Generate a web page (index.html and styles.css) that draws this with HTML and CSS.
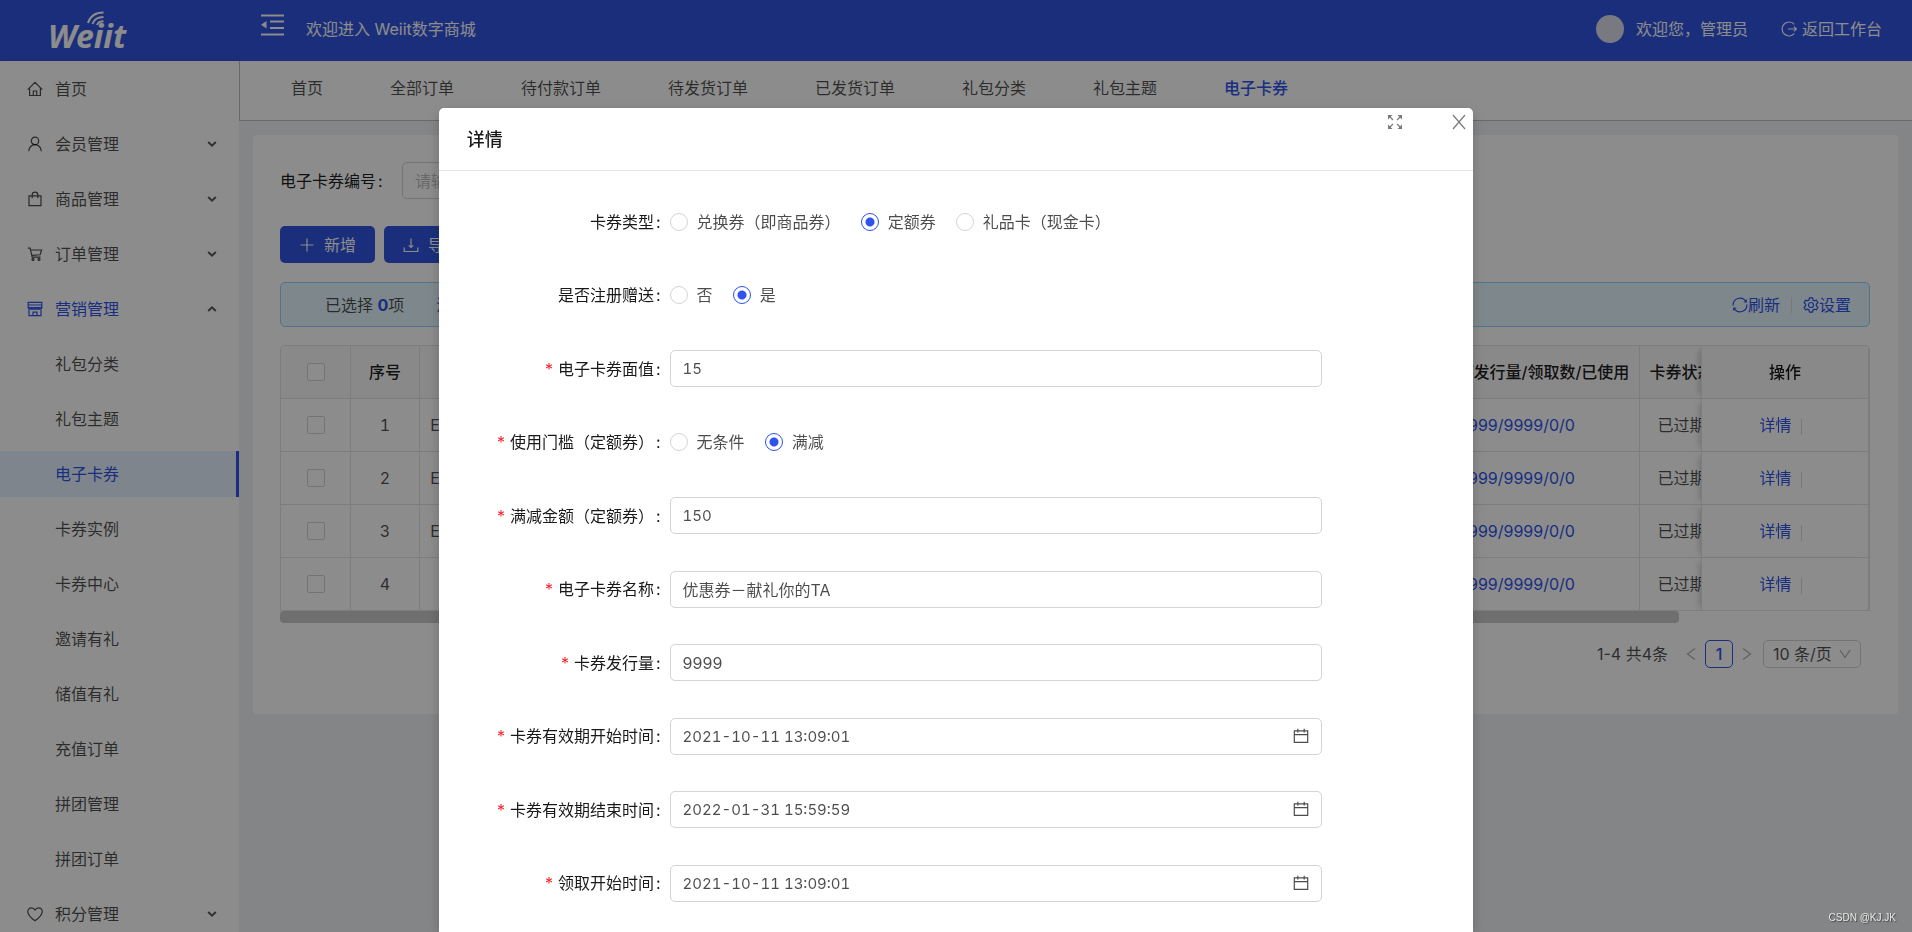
FILE: index.html
```html
<!DOCTYPE html>
<html lang="zh-CN">
<head>
<meta charset="utf-8">
<title>Weiit数字商城</title>
<link rel="stylesheet" href="styles.css">
</head>
<body>
<svg class="sprite" aria-hidden="true">
  <symbol id="i-home" viewBox="0 0 16 16"><path d="M.7 8.6 8 1.4l7.3 7.2M2.6 7.4v7.1h10.8V7.4M6.3 14.4V10h3.4v4.4"/></symbol>
  <symbol id="i-user" viewBox="0 0 16 16"><circle cx="8" cy="4.9" r="3.7"/><path d="M1.7 15.2c.2-3.700 2.800-6.600 6.300-6.600s6.100 2.900 6.300 6.600"/></symbol>
  <symbol id="i-bag" viewBox="0 0 16 16"><path d="M2 4.800h12v9.800H2zM5.200 7.300V4a2.800 2.800 0 0 1 5.600 0v3.300"/></symbol>
  <symbol id="i-cart" viewBox="0 0 16 16"><path d="M.8 2.200h2.300l2.100 8.900h8.300M3.600 4h11l-1.500 4.800-8.300.5"/><circle cx="6" cy="13.400" r="1"/><circle cx="12" cy="13.400" r="1"/></symbol>
  <symbol id="i-shop" viewBox="0 0 16 16"><path d="M1.200 1.400h13.600v5.200H1.200zM1.200 4h13.600M2 8v6.600h12V8M1.200 6.600c0 2.200 3.400 2.200 3.400 0 0 2.200 3.400 2.200 3.400 0 0 2.200 3.400 2.200 3.400 0 0 2.200 3.400 2.200 3.400 0M6 14.500v-3.300h4v3.300"/></symbol>
  <symbol id="i-heart" viewBox="0 0 16 16"><path d="M8 14.800C4.500 12.200.8 9.400.8 5.700.8 3.400 2.400 1.800 4.500 1.800c1.500 0 2.800.8 3.500 2.200.7-1.400 2-2.200 3.500-2.200 2.100 0 3.700 1.600 3.700 3.900 0 3.700-3.700 6.500-7.200 9.100z"/></symbol>
  <symbol id="i-down" viewBox="0 0 10 10"><path d="M1.200 3 5 6.700 8.800 3"/></symbol>
  <symbol id="i-wide-down" viewBox="0 0 14 14"><path d="M2 3l5 7.500L12 3"/></symbol>
  <symbol id="i-left" viewBox="0 0 10 14"><path d="M9 1.500 1.500 7 9 12.500"/></symbol>
  <symbol id="i-calendar" viewBox="0 0 16 16"><path d="M1.300 2.800h13.400v11.600H1.300zM1.300 6.700h13.400M4.800.8v3.600M11.200.8v3.600"/></symbol>
  <symbol id="i-sync" viewBox="0 0 16 16"><path d="M1.200 8.600A6.800 6.800 0 0 1 13.900 4.700M14.800 7.400A6.800 6.800 0 0 1 2.100 11.300M14.300 2.400v2.600h-2.600M1.700 13.600V11h2.600"/></symbol>
  <symbol id="i-gear" viewBox="0 0 16 16"><path d="M6.500.9h3l.5 2.100 1.300.8 2.100-.7 1.500 2.600-1.600 1.500v1.600l1.600 1.500-1.500 2.600-2.100-.7-1.300.8-.5 2.100h-3L6 13l-1.300-.8-2.100.7-1.500-2.600 1.600-1.500V7.200L1.100 5.700l1.500-2.600 2.100.7L6 3z"/><circle cx="8" cy="8" r="2.500"/></symbol>
</svg>

<div class="app">
  <header class="top">
    <div class="brand">
      <svg class="logo" viewBox="0 0 90 44" role="img" aria-label="Weiit">
        <g class="waves"><path d="M42 16c2-6.500 7.500-10.500 15.500-10.500"/><path d="M46.500 17c1.500-4.500 5.500-7 11-7"/><path d="M51 18c1-2.500 3.200-3.700 6.500-3.700"/></g>
        <text class="logo-text" x="2" y="41">Weiit</text>
      </svg>
    </div>
    <button class="fold" aria-label="收起菜单">
      <svg viewBox="0 0 24 22"><path d="M0 1.500h23M9 7.500h14M9 14h14M0 20.500h23"/><path class="solid" d="M0 10.800 5.500 7v7.600z"/></svg>
    </button>
    <span class="welcome">欢迎进入 Weiit数字商城</span>
    <div class="account">
      <span class="avatar"></span>
      <span class="hello">欢迎您，管理员</span>
      <a class="back" href="#"><svg class="icon" viewBox="0 0 16 16"><path d="M13.300 3.300a7 7 0 1 0 0 9.400M7 8h8.300M13 5.700 15.300 8 13 10.300"/></svg>返回工作台</a>
    </div>
  </header>

  <div class="body">
    <nav class="side">
      <a class="item" href="#"><svg class="icon"><use href="#i-home"/></svg>首页</a>
      <a class="item" href="#"><svg class="icon"><use href="#i-user"/></svg>会员管理<svg class="arrow"><use href="#i-down"/></svg></a>
      <a class="item" href="#"><svg class="icon"><use href="#i-bag"/></svg>商品管理<svg class="arrow"><use href="#i-down"/></svg></a>
      <a class="item" href="#"><svg class="icon"><use href="#i-cart"/></svg>订单管理<svg class="arrow"><use href="#i-down"/></svg></a>
      <a class="item open" href="#"><svg class="icon"><use href="#i-shop"/></svg>营销管理<svg class="arrow"><use href="#i-down"/></svg></a>
      <a class="item sub" href="#">礼包分类</a>
      <a class="item sub" href="#">礼包主题</a>
      <a class="item sub active" href="#">电子卡券</a>
      <a class="item sub" href="#">卡券实例</a>
      <a class="item sub" href="#">卡券中心</a>
      <a class="item sub" href="#">邀请有礼</a>
      <a class="item sub" href="#">储值有礼</a>
      <a class="item sub" href="#">充值订单</a>
      <a class="item sub" href="#">拼团管理</a>
      <a class="item sub" href="#">拼团订单</a>
      <a class="item" href="#"><svg class="icon"><use href="#i-heart"/></svg>积分管理<svg class="arrow"><use href="#i-down"/></svg></a>
    </nav>

    <main class="main">
      <div class="tabs">
        <a href="#">首页</a><a href="#">全部订单</a><a href="#">待付款订单</a><a href="#">待发货订单</a><a href="#">已发货订单</a><a href="#">礼包分类</a><a href="#">礼包主题</a><a class="current" href="#">电子卡券</a>
      </div>

      <section class="card">
        <div class="search">
          <label for="code">电子卡券编号<span class="colon">:</span></label>
          <input class="box" id="code" type="text" placeholder="请输入">
        </div>
        <div class="actions">
          <button class="btn"><svg class="icon" viewBox="0 0 16 16"><path d="M8 1.500v13M1.500 8h13"/></svg>新增</button>
          <button class="btn"><svg class="icon" viewBox="0 0 16 16"><path d="M1.200 10.500v4h13.600v-4M8 1.500v9M5.800 8.300 8 10.500l2.200-2.200"/></svg>导出</button>
        </div>
        <div class="notice">
          <span>已选择 <b>0</b>项</span>
          <a class="clear" href="#">清空</a>
          <div class="tools">
            <a href="#"><svg class="icon"><use href="#i-sync"/></svg>刷新</a>
            <i class="bar"></i>
            <a href="#"><svg class="icon"><use href="#i-gear"/></svg>设置</a>
          </div>
        </div>

        <div class="table-wrap">
          <table class="grid">
            <colgroup><col class="c-check"><col class="c-no"><col class="c-code"><col class="c-name"><col class="c-count"><col class="c-state"><col class="c-time"><col class="c-op"></colgroup>
            <thead>
              <tr><th><input type="checkbox" aria-label="全选"></th><th>序号</th><th>编号</th><th>电子卡券名称</th><th>发行总量/发行量/领取数/已使用</th><th>卡券状态</th><th></th><th class="fixed">操作</th></tr>
            </thead>
            <tbody>
              <tr><td><input type="checkbox" aria-label="选择1"></td><td>1</td><td>EC202110110</td><td></td><td><a href="#">9999/9999/0/0</a></td><td>已过期</td><td></td><td class="fixed"><a href="#">详情</a><i class="bar"></i></td></tr>
              <tr><td><input type="checkbox" aria-label="选择2"></td><td>2</td><td>EC202110110</td><td></td><td><a href="#">9999/9999/0/0</a></td><td>已过期</td><td></td><td class="fixed"><a href="#">详情</a><i class="bar"></i></td></tr>
              <tr><td><input type="checkbox" aria-label="选择3"></td><td>3</td><td>EC202110111</td><td></td><td><a href="#">9999/9999/0/0</a></td><td>已过期</td><td></td><td class="fixed"><a href="#">详情</a><i class="bar"></i></td></tr>
              <tr><td><input type="checkbox" aria-label="选择4"></td><td>4</td><td>EC20211</td><td></td><td><a href="#">9999/9999/0/0</a></td><td>已过期</td><td></td><td class="fixed"><a href="#">详情</a><i class="bar"></i></td></tr>
            </tbody>
          </table>
        </div>
        <div class="scroll"><div class="thumb"></div></div>

        <div class="pager">
          <span>1-4 共4条</span>
          <button class="step" aria-label="上一页"><svg><use href="#i-left"/></svg></button>
          <button class="page">1</button>
          <button class="step next" aria-label="下一页"><svg><use href="#i-left"/></svg></button>
          <div class="size">
            <select aria-label="每页条数"><option>10 条/页</option></select>
            <svg><use href="#i-wide-down"/></svg>
          </div>
        </div>
      </section>
    </main>
  </div>
</div>

<div class="mask">
  <div class="modal" role="dialog" aria-labelledby="title">
    <div class="modal-head">
      <h2 id="title">详情</h2>
      <div class="modal-tools">
        <button aria-label="全屏"><svg viewBox="0 0 16 16"><path d="M6 6 2.500 2.500M10 6l3.500-3.500M6 10l-3.500 3.500M10 10l3.500 3.500"/><path class="solid" d="M1 1h4.500L1 5.500zM15 1v4.500L10.500 1zM1 15v-4.500L5.500 15zM15 15h-4.500l4.500-4.500z"/></svg></button>
        <button aria-label="关闭"><svg viewBox="0 0 16 16"><path d="M2 1l12 14M14 1 2 15"/></svg></button>
      </div>
    </div>
    <form class="form">
      <div class="row"><span class="label">卡券类型<span class="colon">:</span></span>
        <div class="radios"><label><input type="radio" name="type">兑换券（即商品券）</label><label><input type="radio" name="type" checked>定额券</label><label><input type="radio" name="type">礼品卡（现金卡）</label></div></div>
      <div class="row"><span class="label">是否注册赠送<span class="colon">:</span></span>
        <div class="radios"><label><input type="radio" name="gift">否</label><label><input type="radio" name="gift" checked>是</label></div></div>
      <div class="row"><label class="label must" for="value">电子卡券面值<span class="colon">:</span></label>
        <input class="box num" id="value" type="text" value="15"></div>
      <div class="row"><span class="label must">使用门槛（定额券）<span class="colon">:</span></span>
        <div class="radios"><label><input type="radio" name="limit">无条件</label><label><input type="radio" name="limit" checked>满减</label></div></div>
      <div class="row"><label class="label must" for="full">满减金额（定额券）<span class="colon">:</span></label>
        <input class="box num" id="full" type="text" value="150"></div>
      <div class="row"><label class="label must" for="name">电子卡券名称<span class="colon">:</span></label>
        <input class="box" id="name" type="text" value="优惠券－献礼你的TA"></div>
      <div class="row"><label class="label must" for="amount">卡券发行量<span class="colon">:</span></label>
        <input class="box" id="amount" type="text" value="9999"></div>
      <div class="row"><label class="label must" for="start">卡券有效期开始时间<span class="colon">:</span></label>
        <div class="date"><input class="box num" id="start" type="text" value="2021-10-11 13:09:01"><svg class="icon"><use href="#i-calendar"/></svg></div></div>
      <div class="row"><label class="label must" for="end">卡券有效期结束时间<span class="colon">:</span></label>
        <div class="date"><input class="box num" id="end" type="text" value="2022-01-31 15:59:59"><svg class="icon"><use href="#i-calendar"/></svg></div></div>
      <div class="row"><label class="label must" for="take">领取开始时间<span class="colon">:</span></label>
        <div class="date"><input class="box num" id="take" type="text" value="2021-10-11 13:09:01"><svg class="icon"><use href="#i-calendar"/></svg></div></div>
    </form>
  </div>
</div>
<span class="mark">CSDN @KJ.JK</span>
</body>
</html>
```
FILE: styles.css
```css
:root {
  --primary: #2f54eb;
  --text: rgba(0, 0, 0, .7);
  --strong: rgba(0, 0, 0, .9);
  --line: #e4e4e4;
  --border: #d4d4d4;
}
* { box-sizing: border-box; }
body {
  margin: 0;
  overflow: hidden;
  font: 16px/24px Inter, "Noto Sans CJK SC", sans-serif;
  color: var(--text);
}
a { color: var(--primary); text-decoration: none; }
button, input, select { font: inherit; color: inherit; }
button { padding: 0; border: 0; background: none; }
svg { fill: none; stroke: currentColor; stroke-width: 1.2; display: block; flex: none; }
.solid { fill: currentColor; stroke: none; }
.sprite { position: absolute; width: 0; height: 0; }
.icon { width: 16px; height: 16px; }
.bar { display: inline-block; width: 1px; height: 16px; background: #d9d9d9; }
.colon { margin: 0 9px 0 2px; }
.box {
  width: 100%;
  height: 37px;
  padding: 0 12px;
  border: 1px solid var(--border);
  border-radius: 5px;
  background: #fff;
}
.box::placeholder { color: #bfbfbf; }
.num { font-size: 15px; font-variant-numeric: tabular-nums; }

.app { display: flex; flex-direction: column; height: 100vh; }
.top {
  display: flex;
  align-items: center;
  flex: none;
  height: 61px;
  padding: 0 30px 4px 0;
  background: #3155e0;
  color: #fff;
}
.brand { width: 239px; padding: 0 0 0 46px; }
.logo { width: 90px; height: 44px; overflow: visible; }
.logo-text { font: italic 700 32px "Noto Sans", sans-serif; fill: #fff; stroke: none; }
.waves { stroke-width: 2; }
.fold { margin: -8px 21px 0 22px; }
.fold svg { width: 24px; height: 22px; stroke-width: 2; }
.account { display: flex; align-items: center; margin-left: auto; }
.avatar { width: 28px; height: 28px; border-radius: 50%; background: #dcdcec; margin-right: 12px; }
.back { display: flex; align-items: center; gap: 5px; margin-left: 33px; color: #fff; }

.body { display: flex; flex: 1; min-height: 0; }
.side {
  flex: none;
  width: 239px;
  padding-top: 1px;
  background: #fff;
  overflow: hidden;
  box-shadow: 2px 0 8px rgba(29, 35, 41, .08);
}
.item {
  display: flex;
  align-items: center;
  gap: 12px;
  height: 46px;
  margin: 4px 0 9px;
  padding: 0 22px 0 27px;
  color: var(--text);
}
.item + .item { margin-top: 0; }
.item.sub { padding-left: 55px; }
.item.open { color: var(--primary); }
.item.active { color: var(--primary); background: #e6f3ff; border-right: 3px solid var(--primary); }
.arrow { width: 10px; height: 10px; margin-left: auto; stroke-width: 2; color: #595959; }
.open .arrow { transform: rotate(180deg); }

.main { flex: 1; min-width: 0; background: #f0f2f5; }
.tabs {
  display: flex;
  align-items: center;
  gap: 67px;
  height: 60px;
  padding: 0 51px 6px;
  background: #fff;
  border: solid #bfbfbf;
  border-width: 0 0 1px 1px;
}
.tabs a { color: var(--text); }
.tabs .current { color: var(--primary); font-weight: 500; }

.card { margin: 14px; padding: 27px 28px 46px 27px; background: #fff; border-radius: 3px; }
.search { display: flex; align-items: center; color: var(--strong); }
.search label { width: 122px; flex: none; }
.search .box { width: 240px; }
.actions { display: flex; gap: 9px; margin: 27px 0 19px; }
.btn {
  display: flex;
  align-items: center;
  justify-content: center;
  gap: 9px;
  width: 95px;
  height: 37px;
  border-radius: 5px;
  background: #3155e0;
  color: #fff;
}
.notice {
  display: flex;
  align-items: center;
  height: 45px;
  margin-bottom: 18px;
  padding: 0 18px 0 44px;
  border: 1px solid #91d5ff;
  border-radius: 5px;
  background: #e6f7ff;
}
.notice b { color: var(--primary); }
.clear { margin-left: 32px; }
.tools { display: flex; align-items: center; margin-left: auto; gap: 11px; }
.tools a { display: flex; align-items: center; }

.table-wrap { overflow: hidden; border: 1px solid var(--line); border-width: 1px 1px 0; border-radius: 5px 5px 0 0; }
.grid { width: 1811px; table-layout: fixed; border-collapse: separate; border-spacing: 0; text-align: center; font-variant-numeric: tabular-nums; }
.grid a { font-variant-numeric: normal; }
.c-check { width: 70px; }
.c-no { width: 69px; }
.c-code { width: 136px; }
.c-name { width: 838px; }
.c-count { width: 246px; }
.c-state { width: 84px; }
.c-op { width: 168px; }
.grid th, .grid td { height: 53px; padding: 0; border: solid var(--line); border-width: 0 1px 1px 0; white-space: nowrap; }
.grid th { color: var(--strong); background: #fafafa; font-weight: 500; }
.grid .fixed { position: sticky; right: 0; background: #fff; border-left: 1px solid var(--line); box-shadow: -6px 0 6px -4px rgba(0, 0, 0, .18); }
.grid th.fixed { background: #fafafa; }
.fixed .bar { margin: 0 9px; vertical-align: middle; }
input[type="checkbox"] {
  appearance: none;
  display: block;
  width: 18px;
  height: 18px;
  margin: 0 auto;
  border: 1px solid var(--border);
  border-radius: 2px;
  background: #fff;
}
.thumb { width: 88%; height: 12px; border-radius: 4px; background: #cacaca; }

.pager { display: flex; align-items: center; justify-content: flex-end; margin: 17px 9px 0 0; }
.step { margin-left: 18px; color: #b0b0b0; }
.step svg { width: 10px; height: 14px; }
.next { margin-left: 9px; transform: rotate(180deg); }
.page { width: 28px; height: 28px; margin-left: 9px; border: 1px solid var(--primary); border-radius: 5px; color: var(--primary); font-weight: 500; }
.next + .size { margin-left: 11px; }
.size { position: relative; }
.size select { appearance: none; width: 98px; height: 28px; padding: 0 9px; border: 1px solid var(--border); border-radius: 5px; background: #fff; }
.size svg { position: absolute; right: 9px; top: 7px; width: 14px; height: 14px; color: #aaa; pointer-events: none; }

.mask {
  position: fixed;
  inset: 0;
  display: flex;
  justify-content: center;
  align-items: flex-start;
  padding-top: 108px;
  background: rgba(0, 0, 0, .45);
}
.modal {
  width: calc(54% + 2px);
  min-height: 100%;
  background: #fff;
  border-radius: 5px 5px 0 0;
  box-shadow: 0 4px 14px rgba(0, 0, 0, .2);
}
.modal-head { display: flex; height: 63px; padding: 0 6px 0 28px; border-bottom: 1px solid var(--line); }
.modal-head h2 { margin: 0; font-size: 18px; line-height: 64px; font-weight: 500; color: var(--strong); }
.modal-tools { display: flex; gap: 48px; margin-left: auto; height: 28px; color: #7a7a7a; }
.modal-tools svg { width: 16px; height: 16px; }
.form { display: grid; grid-auto-rows: 1fr; height: 735px; margin-top: 14px; padding: 0 29px 0 27px; }
.row { display: grid; grid-template-columns: 5fr 16fr 3fr; align-items: center; }
.label { text-align: right; color: var(--strong); }
.must::before { content: "*"; margin-right: 5px; color: #f5222d; }
.radios { display: flex; gap: 20px; }
.radios label { display: flex; align-items: center; gap: 9px; }
input[type="radio"] {
  appearance: none;
  width: 18px;
  height: 18px;
  margin: 0;
  border: 1px solid var(--border);
  border-radius: 50%;
}
input[type="radio"]:checked { border-color: var(--primary); background: radial-gradient(circle, var(--primary) 4px, #fff 5px); }
.date { position: relative; }
.date .icon { position: absolute; right: 13px; top: 10px; }
.mark {
  position: fixed;
  right: 16px;
  bottom: 6px;
  font: 10px/16px "Liberation Sans", sans-serif;
  color: #e8e8e8;
  text-shadow: 1px 1px 1px #444;
}
```
